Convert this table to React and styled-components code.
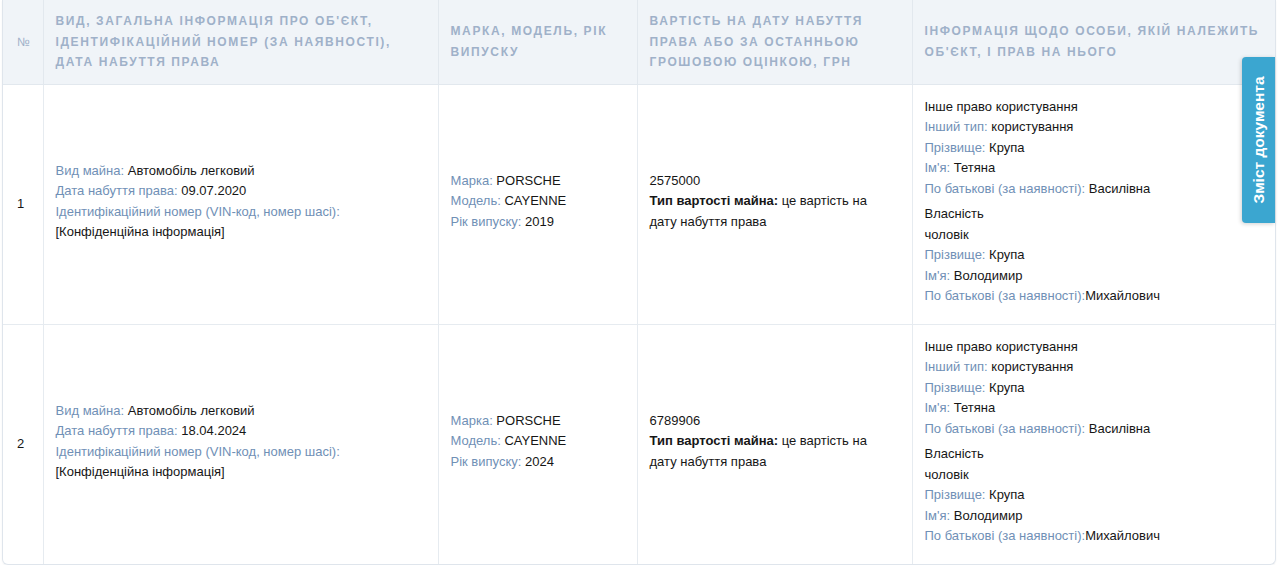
import React from "react";
import styled, { createGlobalStyle } from "styled-components";

const Global = createGlobalStyle`
  html, body { margin: 0; padding: 0; background: #ffffff; }
  body { font-family: "Liberation Sans", Arial, Helvetica, sans-serif; color: #1b1b1b; }
`;

const Page = styled.div`
  position: relative;
  padding: 0 4px 1px 2px;
  height: 565px;
  box-sizing: border-box;
  overflow: hidden;
`;

const Frame = styled.div`
  border: 1px solid #dfe5ec;
  border-top: none;
  border-radius: 0 0 6px 6px;
  overflow: hidden;
  box-shadow: 0 1px 2px rgba(0, 0, 0, 0.05);
`;

const Table = styled.table`
  width: 100%;
  border-collapse: collapse;
  table-layout: fixed;
`;

const Head = styled.th`
  background: #f0f4f8;
  color: #9fb1c9;
  font-size: 12px;
  font-weight: 700;
  letter-spacing: 1.62px;
  text-transform: uppercase;
  text-align: left;
  line-height: 20.5px;
  padding: 11px 12px;
  height: 84px;
  box-sizing: border-box;
  vertical-align: middle;
  border-left: 1px solid #e2e8ee;
  border-bottom: 1px solid #e2e8ee;
  &:first-child { border-left: none; letter-spacing: 0; font-weight: 400; padding-left: 14px; }
`;

const Cell = styled.td`
  font-size: 13px;
  line-height: 20.5px;
  padding: 12px ${(p) => (p.$wide ? "20px" : "12px")} 12px 12px;
  vertical-align: middle;
  border-left: 1px solid #e6ebf0;
  border-top: 1px solid #e6ebf0;
  color: #161616;
  &:first-child { border-left: none; padding-left: 14px; }
`;

const Block = styled.div`
  margin-bottom: 5px;
`;

const Line = styled.div``;

const Label = styled.span`
  color: #7090b6;
`;

const Strong = styled.b`
  font-weight: 700;
`;

const Tab = styled.div`
  position: absolute;
  top: 57px;
  right: 5px;
  width: 33px;
  height: 166px;
  background: #3ba6d0;
  border-radius: 4px 0 0 4px;
  box-shadow: -1px 1px 4px rgba(0, 0, 0, 0.18);
  display: flex;
  align-items: center;
  justify-content: center;
`;

const TabText = styled.span`
  color: #ffffff;
  font-weight: 700;
  font-size: 15.5px;
  white-space: nowrap;
  transform: rotate(-90deg);
`;

const rows = [
  { n: 1, date: "09.07.2020", year: "2019", price: "2575000" },
  { n: 2, date: "18.04.2024", year: "2024", price: "6789906" },
];

function Owner() {
  return (
    <>
      <Block>
        <Line>Інше право користування</Line>
        <Line><Label>Інший тип:</Label> користування</Line>
        <Line><Label>Прізвище:</Label> Крупа</Line>
        <Line><Label>Ім'я:</Label> Тетяна</Line>
        <Line><Label>По батькові (за наявності):</Label> Василівна</Line>
      </Block>
      <Block>
        <Line>Власність</Line>
        <Line>чоловік</Line>
        <Line><Label>Прізвище:</Label> Крупа</Line>
        <Line><Label>Ім'я:</Label> Володимир</Line>
        <Line><Label>По батькові (за наявності):</Label>Михайлович</Line>
      </Block>
    </>
  );
}

export default function App() {
  return (
    <Page>
      <Global />
      <Frame>
        <Table>
          <colgroup>
            <col style={{ width: 40 }} />
            <col style={{ width: 395 }} />
            <col style={{ width: 199 }} />
            <col style={{ width: 275 }} />
            <col />
          </colgroup>
          <thead>
            <tr>
              <Head>№</Head>
              <Head>Вид, загальна інформація про об'єкт, ідентифікаційний номер (за наявності), дата набуття права</Head>
              <Head>Марка, модель, рік випуску</Head>
              <Head>Вартість на дату набуття права або за останньою грошовою оцінкою, грн</Head>
              <Head>Інформація щодо особи, якій належить об'єкт, і прав на нього</Head>
            </tr>
          </thead>
          <tbody>
            {rows.map((r) => (
              <tr key={r.n}>
                <Cell>{r.n}</Cell>
                <Cell>
                  <Block>
                    <Line><Label>Вид майна:</Label> Автомобіль легковий</Line>
                    <Line><Label>Дата набуття права:</Label> {r.date}</Line>
                    <Line><Label>Ідентифікаційний номер (VIN-код, номер шасі):</Label></Line>
                    <Line>[Конфіденційна інформація]</Line>
                  </Block>
                </Cell>
                <Cell>
                  <Block>
                    <Line><Label>Марка:</Label> PORSCHE</Line>
                    <Line><Label>Модель:</Label> CAYENNE</Line>
                    <Line><Label>Рік випуску:</Label> {r.year}</Line>
                  </Block>
                </Cell>
                <Cell $wide>
                  <Block>
                    <Line>{r.price}</Line>
                    <Line><Strong>Тип вартості майна:</Strong> це вартість на дату набуття права</Line>
                  </Block>
                </Cell>
                <Cell><Owner /></Cell>
              </tr>
            ))}
          </tbody>
        </Table>
      </Frame>
      <Tab><TabText>Зміст документа</TabText></Tab>
    </Page>
  );
}
